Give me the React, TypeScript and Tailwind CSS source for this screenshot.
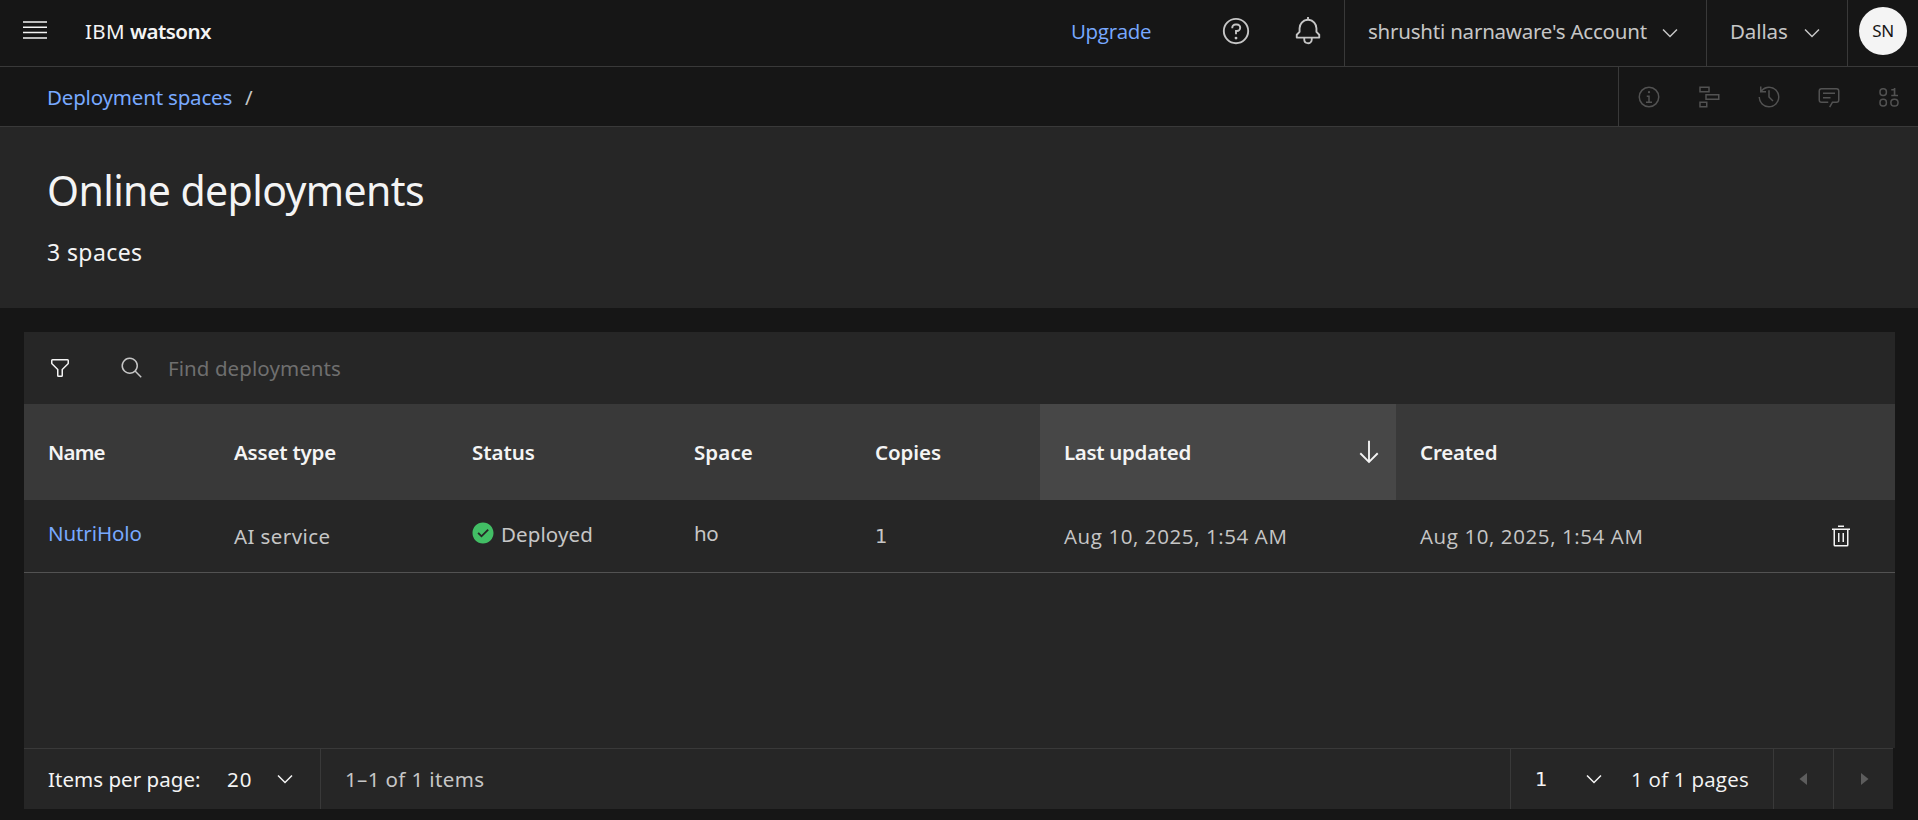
import React from "react";
import type { ReactNode } from "react";

type IconProps = { className?: string; box?: number; children: ReactNode };

function Icon({ className = "size-6", box = 32, children }: IconProps) {
  return (
    <svg viewBox={`0 0 ${box} ${box}`} fill="currentColor" className={`block shrink-0 ${className}`} aria-hidden="true">
      {children}
    </svg>
  );
}

const RING = "M16,2A14,14,0,1,0,30,16,14,14,0,0,0,16,2Zm0,26A12,12,0,1,1,28,16,12,12,0,0,1,16,28Z";

const ChevronDown = ({ className = "" }: { className?: string }) => (
  <Icon box={16} className={`size-6 ${className}`}>
    <path d="M8 11L3 6 3.7 5.3 8 9.6 12.3 5.3 13 6z" />
  </Icon>
);

const MenuIcon = () => (
  <svg viewBox="0 0 24 18" className="mb-[3px] block h-[18px] w-6 shrink-0" fill="currentColor" aria-hidden="true">
    <path d="M0 0.2h24v1.5H0zM0 5.4h24v1.5H0zM0 10.8h24v1.5H0zM0 16.3h24v1.5H0z" />
  </svg>
);

const HelpIcon = () => (
  <Icon className="size-[30px]">
    <path d={RING} />
    <circle cx="16" cy="23.5" r="1.5" />
    <path d="M17,8H15.5A4.49,4.49,0,0,0,11,12.5V13h2v-.5A2.5,2.5,0,0,1,15.5,10H17a2.5,2.5,0,0,1,0,5H15v4.5h2V17a4.5,4.5,0,0,0,0-9Z" />
  </Icon>
);

const BellIcon = () => (
  <Icon className="size-[30px]">
    <path d="M28.7071,19.293,26,16.5859V13a10.0136,10.0136,0,0,0-9-9.9492V1H15V3.0508A10.0136,10.0136,0,0,0,6,13v3.5859L3.2929,19.293A1,1,0,0,0,3,20v3a1,1,0,0,0,1,1h7v.7768a5.152,5.152,0,0,0,4.5,5.1987A5.0057,5.0057,0,0,0,21,25V24h7a1,1,0,0,0,1-1V20A1,1,0,0,0,28.7071,19.293ZM19,25a3,3,0,0,1-6,0V24h6Zm8-3H5V20.4141L7.707,17.707A1,1,0,0,0,8,17V13a8,8,0,0,1,16,0v4a1,1,0,0,0,.293.707L27,20.4141Z" />
  </Icon>
);

const InfoIcon = () => (
  <Icon>
    <path d={RING} />
    <path d="M17 22V14H13v2h2v6H12v2h8V22ZM16,8a1.5,1.5,0,1,0,1.5,1.5A1.5,1.5,0,0,0,16,8Z" />
  </Icon>
);

const FlowIcon = () => (
  <Icon>
    <path
      fill="none"
      stroke="currentColor"
      strokeWidth="2"
      d="M4 3h12v6H4zM12 13h17v6H12zM4 23h9v6H4z"
    />
  </Icon>
);

const HistoryIcon = () => (
  <Icon>
    <path d="M20.59 22 15 16.41V7h2v8.58l5 5.01Z" />
    <path d="M16,2A13.94,13.94,0,0,0,6,6.23V2H4v8h8V8H7.08A12,12,0,1,1,4,16H2A14,14,0,1,0,16,2Z" />
  </Icon>
);

const ChatIcon = () => (
  <Icon>
    <path d="M17.74,30,16,29l4-7h6a2,2,0,0,0,2-2V8a2,2,0,0,0-2-2H6A2,2,0,0,0,4,8V20a2,2,0,0,0,2,2h9v2H6a4,4,0,0,1-4-4V8A4,4,0,0,1,6,4H26a4,4,0,0,1,4,4V20a4,4,0,0,1-4,4H21.16Z" />
    <path d="M8 10h16v2H8zM8 16h10v2H8z" />
  </Icon>
);

const DataIcon = () => (
  <Icon>
    <g fill="none" stroke="currentColor" strokeWidth="2">
      <rect x="4" y="5" width="8.5" height="9" rx="4" />
      <rect x="4" y="19" width="8.5" height="9" rx="4" />
      <rect x="18.5" y="19" width="9.5" height="9" rx="4.4" />
    </g>
    <path d="M24.5 13V4h-2.2v1.2H19v2h3.3V13H19v2h9v-2Z" />
  </Icon>
);

const FilterIcon = () => (
  <Icon>
    <path d="M18,28H14a2,2,0,0,1-2-2V18.41L4.59,11A2,2,0,0,1,4,9.59V6A2,2,0,0,1,6,4H26a2,2,0,0,1,2,2V9.59A2,2,0,0,1,27.41,11L20,18.41V26A2,2,0,0,1,18,28ZM6,6V9.59l8,8V26h4V17.59l8-8V6Z" />
  </Icon>
);

const SearchIcon = () => (
  <Icon>
    <path d="M29,27.5859l-7.5521-7.5521a11.0177,11.0177,0,1,0-1.4141,1.4141L27.5859,29ZM4,13a9,9,0,1,1,9,9A9.01,9.01,0,0,1,4,13Z" />
  </Icon>
);

const ArrowDownIcon = () => (
  <Icon className="size-[30px]">
    <path d="M24.59 16.59 17 24.17V4H15V24.17L7.41 16.59 6 18 16 28 26 18Z" />
  </Icon>
);

const CheckIcon = () => (
  <Icon box={16} className="size-6 text-[#42be65]">
    <path d="M8,1C4.1,1,1,4.1,1,8c0,3.9,3.1,7,7,7s7-3.1,7-7C15,4.1,11.9,1,8,1z M7,11L4.3,8.3l0.9-0.8L7,9.3l4-3.9l0.9,0.8L7,11z" />
  </Icon>
);

const TrashIcon = () => (
  <Icon>
    <path d="M12 12h2v12h-2zM18 12h2v12h-2z" />
    <path d="M4,6V8H6V28a2,2,0,0,0,2,2H24a2,2,0,0,0,2-2V8h2V6ZM8,28V8H24V28Z" />
    <path d="M12 2h8v2h-8z" />
  </Icon>
);

const actions = [InfoIcon, FlowIcon, HistoryIcon, ChatIcon, DataIcon];

const columns = [
  { label: "Name", cls: "pl-6 tracking-[-0.81px]" },
  { label: "Asset type", cls: "pl-6 tracking-[-0.2px]" },
  { label: "Status", cls: "pl-6 tracking-[-0.05px]" },
  { label: "Space", cls: "pl-6 tracking-[0.1px]" },
  { label: "Copies", cls: "pl-6 tracking-[-0.07px]" },
];

const GRID = "grid grid-cols-[186px_238px_222px_181px_189px_356px_1fr_108px]";

export default function App() {
  return (
    <div className="flex h-[820px] w-[1918px] flex-col overflow-hidden bg-[#161616] font-['Noto_Sans','Open_Sans',sans-serif] text-[20.5px] leading-6 whitespace-nowrap text-[#c6c6c6]">
      <header className="flex h-[67px] shrink-0 border-b border-[#393939]">
        <div className="flex h-[62px] flex-1 items-center pl-[23px] text-[#f4f4f4]">
          <MenuIcon />
          <div className="ml-[38px] flex gap-[5px]">
            <span className="tracking-[0.36px]">IBM</span>
            <span className="font-semibold tracking-[-0.53px]">watsonx</span>
          </div>
        </div>
        <a className="flex h-[62px] w-[149px] items-center font-['Open_Sans',sans-serif] tracking-[-0.32px] text-[#78a9ff]">
          Upgrade
        </a>
        <div className="flex h-[62px] w-[124px] items-center gap-[42px] pl-px">
          <HelpIcon />
          <BellIcon />
        </div>
        <div className="flex w-[362px] border-l border-[#393939] pl-[23px]">
          <div className="flex h-[62px] items-center">
            <span className="w-[290px] tracking-[-0.22px]">shrushti narnaware's Account</span>
            <ChevronDown className="mt-1" />
          </div>
        </div>
        <div className="flex w-[141px] border-l border-[#393939] pl-[23px]">
          <div className="flex h-[62px] items-center">
            <span className="w-[70px] tracking-[-0.11px]">Dallas</span>
            <ChevronDown className="mt-1" />
          </div>
        </div>
        <div className="w-[71px] border-l border-[#393939] pt-[7px] pl-[11px]">
          <div className="flex size-12 items-center justify-center rounded-full bg-[#f4f4f4] text-[17px] tracking-[-0.4px] text-[#161616]">
            SN
          </div>
        </div>
      </header>

      <nav className="flex h-[60px] shrink-0 border-b border-[#393939]">
        <div className="flex flex-1 items-center gap-[13px] pl-[47px]">
          <a className="tracking-[-0.18px] text-[#78a9ff]">Deployment spaces</a>
          <span>/</span>
        </div>
        <div className="flex w-[300px] items-center gap-9 border-l border-[#393939] pl-[18px] text-[#525252]">
          {actions.map((Action, i) => (
            <Action key={i} />
          ))}
        </div>
      </nav>

      <section className="h-[181px] shrink-0 bg-[#262626] pt-10 pl-[47px] text-[#f4f4f4]">
        <h1 className="text-[41px] leading-[46px] tracking-[-0.6px]">Online deployments</h1>
        <p className="mt-[23px] text-[23px] leading-8 tracking-[0.4px]">3 spaces</p>
      </section>

      <main className="mt-6 ml-6 flex w-[1871px] flex-col">
        <div className="flex h-[416px] flex-col bg-[#262626]">
          <div className="flex h-[72px] items-center pl-6">
            <span className="text-[#f4f4f4]">
              <FilterIcon />
            </span>
            <span className="ml-12">
              <SearchIcon />
            </span>
            <span className="ml-6 tracking-[0.08px] text-[#6f6f6f]">Find deployments</span>
          </div>

          <div className={`${GRID} h-24 items-center bg-[#393939] font-semibold text-[#f4f4f4]`}>
            {columns.map((c) => (
              <div key={c.label} className={c.cls}>
                {c.label}
              </div>
            ))}
            <div className="flex h-24 items-center justify-between bg-[#474747] pr-3 pl-6">
              <span className="tracking-[-0.32px]">Last updated</span>
              <ArrowDownIcon />
            </div>
            <div className="pl-6 tracking-[-0.2px]">Created</div>
            <div />
          </div>

          <div className={`${GRID} h-[73px] border-b border-[#525252] pt-[21px]`}>
            <a className="pl-6 tracking-[-0.1px] text-[#78a9ff]">NutriHolo</a>
            <div className="pt-[3px] pl-6 tracking-[0.41px]">AI service</div>
            <div className="flex gap-1.5 pl-[23px] tracking-[0.1px]">
              <CheckIcon />
              <span className="pt-px">Deployed</span>
            </div>
            <div className="pl-6 tracking-[-0.5px]">ho</div>
            <div className="pt-1 pl-6 font-['DejaVu_Sans',sans-serif] text-[19.5px]">1</div>
            <div className="pt-[3px] pl-6 font-['Open_Sans',sans-serif] tracking-[0.6px]">Aug 10, 2025, 1:54 AM</div>
            <div className="pt-[3px] pl-6 font-['Open_Sans',sans-serif] tracking-[0.6px]">Aug 10, 2025, 1:54 AM</div>
            <div className="pt-[3px] pl-[42px] text-[#f4f4f4]">
              <TrashIcon />
            </div>
          </div>
        </div>

        <footer className="flex h-[61px] w-[1869px] border-t border-[#393939] bg-[#262626] text-[#f4f4f4]">
          <div className="flex w-[297px] items-center border-r border-[#393939] pl-6">
            <span className="w-[179px] tracking-[0.04px]">Items per page:</span>
            <span className="w-[46px] tracking-[1px]">20</span>
            <ChevronDown />
          </div>
          <div className="flex flex-1 items-center pl-6 tracking-[0.38px] text-[#c6c6c6]">1–1 of 1 items</div>
          <div className="flex w-[264px] items-center border-x border-[#393939] pl-6">
            <span className="w-[47px] pt-0.5 font-['DejaVu_Sans',sans-serif] text-[19.5px]">1</span>
            <ChevronDown />
            <span className="ml-[25px] font-['Open_Sans',sans-serif] tracking-[0.25px]">1 of 1 pages</span>
          </div>
          <div className="flex w-[60px] items-center justify-center border-r border-[#393939] text-[#5d5d5d]">
            <Icon>
              <path d="M20 24 10 16 20 8z" />
            </Icon>
          </div>
          <div className="flex w-[59px] items-center justify-center text-[#5d5d5d]">
            <Icon>
              <path d="M12 8 22 16 12 24z" />
            </Icon>
          </div>
        </footer>
      </main>
    </div>
  );
}
